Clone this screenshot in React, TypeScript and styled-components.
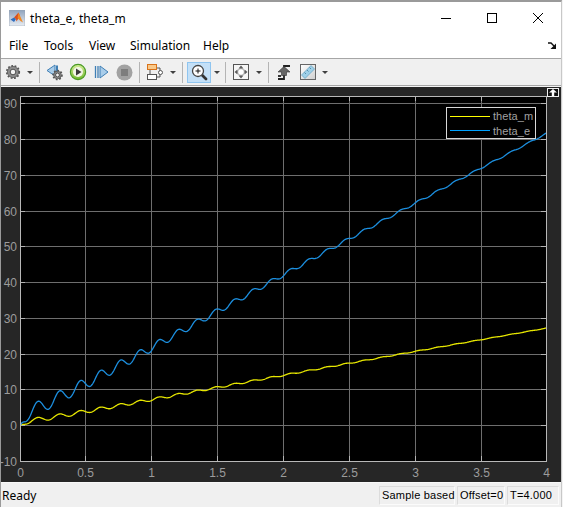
import React from 'react';
import styled, { createGlobalStyle } from 'styled-components';

const GlobalStyle = createGlobalStyle`
  html, body {
    margin: 0;
    padding: 0;
    background: #f4f4f4;
  }
`;

const Window = styled.div`
  width: 562px;
  height: 507px;
  box-sizing: border-box;
  display: flex;
  flex-direction: column;
  border-top: 2px solid #9a9a9a;
  border-left: 1px solid #9a9a9a;
  border-right: 1px solid #c8c8c8;
  font-family: "Noto Sans", "Open Sans", sans-serif;
  color: #000;
  overflow: hidden;
`;

const TitleBar = styled.div`
  height: 32px;
  flex: none;
  display: flex;
  align-items: center;
  background: #fff;
  padding-left: 8px;
`;

const Title = styled.span`
  margin-left: 5px;
  font-size: 12px;
  letter-spacing: 0.1px;
`;

const WindowControls = styled.div`
  margin-left: auto;
  display: flex;
  height: 100%;
`;

const WindowControl = styled.div`
  width: 46px;
  display: flex;
  align-items: center;
  justify-content: center;
`;

const MenuBar = styled.div`
  height: 24px;
  flex: none;
  box-sizing: border-box;
  display: flex;
  align-items: center;
  background: #fff;
  padding: 0 0 2px 8px;
  font-size: 12px;
`;

const MenuItem = styled.span<{ $width: number }>`
  width: ${(p) => p.$width}px;
`;

const MenuCorner = styled.svg`
  margin-left: auto;
  margin-right: 5px;
`;

const Toolbar = styled.div`
  height: 26px;
  flex: none;
  display: flex;
  align-items: center;
  background: #f0f0f0;
  border-top: 1px solid #a6a6a6;
  border-bottom: 1px solid #a6a6a6;
  padding-left: 1px;
`;

const ToolButton = styled.div<{ $width: number; $active?: boolean }>`
  width: ${(p) => p.$width}px;
  height: 21px;
  flex: none;
  box-sizing: border-box;
  display: flex;
  align-items: center;
  justify-content: center;
  background: ${(p) => (p.$active ? '#c4e0f7' : 'transparent')};
  border: 1px solid ${(p) => (p.$active ? '#8fc5f0' : 'transparent')};
`;

const ToolSeparator = styled.div`
  width: 1px;
  height: 21px;
  flex: none;
  margin: 0 4px 0 3px;
  background: #b4b4b4;
`;

const Figure = styled.div`
  height: 395px;
  flex: none;
  position: relative;
  margin-top: 1px;
  background: #262626;
`;

const PlotSvg = styled.svg`
  display: block;
`;

const TickText = styled.text`
  font-family: "Liberation Sans", Arial, sans-serif;
  font-size: 12px;
  fill: #9c9c9c;
`;

const RestoreButton = styled.div`
  position: absolute;
  left: 546px;
  top: 1px;
  width: 12px;
  height: 9px;
  box-sizing: border-box;
  border: 1px solid #f0f0f0;
  background: #111;
  display: flex;
  align-items: center;
  justify-content: center;
`;

const Legend = styled.div`
  position: absolute;
  left: 445px;
  top: 20px;
  width: 90px;
  height: 32px;
  box-sizing: border-box;
  border: 1px solid #d8d8d8;
  background: #000;
  padding: 1px 0 0 3px;
  display: flex;
  flex-direction: column;
  font-family: "Liberation Sans", Arial, sans-serif;
  font-size: 11px;
  letter-spacing: 0.05px;
  color: #a2a2a2;
`;

const LegendRow = styled.div`
  height: 14.5px;
  display: flex;
  align-items: center;
`;

const LegendSwatch = styled.span<{ $color: string }>`
  width: 40px;
  height: 1px;
  margin-right: 3px;
  background: ${(p) => p.$color};
`;

const StatusBar = styled.div`
  flex: 1;
  display: flex;
  align-items: center;
  background: #f0f0f0;
  border-top: 1px solid #f8f8f8;
  padding: 0 2px 0 1px;
  font-family: "Noto Sans", "Open Sans", sans-serif;
  font-size: 12px;
`;

const StatusText = styled.span`
  margin-right: auto;
`;

const StatusCell = styled.div<{ $width: number }>`
  width: ${(p) => p.$width}px;
  height: 19px;
  box-sizing: border-box;
  margin-left: 2px;
  padding-left: 2px;
  border: 1px solid #dcdcdc;
  border-right-color: #fbfbfb;
  border-bottom-color: #fbfbfb;
  display: flex;
  align-items: center;
  white-space: nowrap;
  font-family: "Liberation Sans", Arial, sans-serif;
  font-size: 11px;
  letter-spacing: 0.2px;
`;

const xTicks: [number, string][] = [
  [20, '0'], [85, '0.5'], [151, '1'], [217, '1.5'], [283, '2'],
  [349, '2.5'], [415, '3'], [481, '3.5'], [546, '4'],
];

const yTicks: [number, string][] = [
  [461, '-10'], [425, '0'], [389, '10'], [354, '20'], [318, '30'], [282, '40'],
  [246, '50'], [211, '60'], [175, '70'], [139, '80'], [103, '90'],
];

// rotor angle: ramp plus a ripple that speeds up and dies out
const thetaE = (t: number): number => {
  const start = 1 - Math.exp(-t / 0.03);
  const offset = 2.5 * Math.exp(-1.5 * t) * start;
  const phase = 45 * t - 6 * (1 - Math.exp(-t / 0.6));
  const ripple = 2.1 * Math.exp(-0.65 * t) * start * Math.sin(phase);
  return 20.4 * t + 1.2 * Math.sin((Math.PI * t) / 4) + offset - ripple;
};

const tracePath = (gain: number): string => {
  const points: string[] = [];
  for (let i = 0; i <= 800; i++) {
    const t = i / 200;
    points.push(`${(20.5 + 131.5 * t).toFixed(2)},${(425.5 - 3.58 * thetaE(t) * gain).toFixed(2)}`);
  }
  return 'M' + points.join('L');
};

const Arrow = () => (
  <svg width="6" height="3" viewBox="0 0 6 3"><path d="M0 0h6L3 3z" fill="#404040" /></svg>
);

const GearGlyph = ({ cx, cy, r }: { cx: number; cy: number; r: number }) => (
  <g>
    <circle cx={cx} cy={cy} r={r} fill="#8c8c8c" stroke="#555" strokeWidth="0.8" />
    <circle cx={cx} cy={cy} r={r + 0.7} fill="none" stroke="#555" strokeWidth="1.6" strokeDasharray="1.8 1.6" />
    <circle cx={cx} cy={cy} r={r * 0.5} fill="#f4f4f4" stroke="#444" strokeWidth="0.9" />
  </g>
);

const Gear = () => (
  <svg width="16" height="16" viewBox="0 0 16 16"><GearGlyph cx={8} cy={8} r={5.6} /></svg>
);

const StepBack = () => (
  <svg width="19" height="18" viewBox="0 0 19 18">
    <path d="M1 7.5 9 2v11z" fill="#a9cdea" stroke="#3f7fb5" />
    <path d="M11 2.5v10" stroke="#3f7fb5" strokeWidth="2" />
    <GearGlyph cx={11.5} cy={12} r={3.8} />
  </svg>
);

const Play = () => (
  <svg width="18" height="18" viewBox="0 0 18 18">
    <defs>
      <linearGradient id="playFill" x1="0" y1="0" x2="0" y2="1">
        <stop offset="0" stopColor="#d8ef9a" />
        <stop offset="1" stopColor="#70b82c" />
      </linearGradient>
    </defs>
    <circle cx="9" cy="9" r="7.6" fill="url(#playFill)" stroke="#4a9a24" strokeWidth="1.2" />
    <circle cx="9" cy="9" r="5" fill="#f3f6e6" />
    <path d="M7 5.5 12.5 9 7 12.5z" fill="#3a3a3a" />
  </svg>
);

const StepForward = () => (
  <svg width="15" height="14" viewBox="0 0 15 14">
    <path d="M1.5 1v12M4 1v12" stroke="#3f7fb5" strokeWidth="1.3" />
    <path d="M6 1l8 6-8 6z" fill="#a9cdea" stroke="#3f7fb5" />
  </svg>
);

const Stop = () => (
  <svg width="17" height="17" viewBox="0 0 17 17">
    <circle cx="8.5" cy="8.5" r="8" fill="#a2a2a2" />
    <rect x="5" y="5" width="7" height="7" fill="#7d7d7d" />
  </svg>
);

const Blocks = () => (
  <svg width="18" height="17" viewBox="0 0 18 17">
    <path d="M4 6v4M11 4h3v3M11 13h3v-3" fill="none" stroke="#555" />
    <rect x="1.5" y="0.5" width="9" height="5" fill="#f9c98a" stroke="#d9731a" />
    <rect x="1.5" y="10.5" width="9" height="5" fill="#fff" stroke="#555" />
    <circle cx="14.5" cy="8.5" r="2" fill="#fff" stroke="#555" />
  </svg>
);

const ZoomIn = () => (
  <svg width="17" height="17" viewBox="0 0 17 17">
    <path d="M10.5 10.5 15 15" stroke="#333" strokeWidth="2.8" strokeLinecap="round" />
    <circle cx="7" cy="7" r="5.5" fill="#fff" stroke="#444" strokeWidth="1.3" />
    <path d="M4.5 7h5M7 4.5v5" stroke="#111" />
  </svg>
);

const AutoScale = () => (
  <svg width="16" height="16" viewBox="0 0 16 16">
    <rect x="0.5" y="0.5" width="15" height="15" fill="#f6f6f6" stroke="#555" />
    <circle cx="8" cy="8" r="3.4" fill="#fff" stroke="#aaa" />
    <path d="M8 1.5 10.5 4.5h-5zM8 14.5 5.5 11.500h5zM1.500 8 4.500 5.500v5zM14.500 8 11.500 10.500v-5z" fill="#5c5c5c" />
  </svg>
);

const Trigger = () => (
  <svg width="14" height="16" viewBox="0 0 14 16">
    <path d="M1 15h6V2h6" fill="none" stroke="#222" strokeWidth="1.8" />
    <path d="M1 12h3" stroke="#222" strokeWidth="1.8" />
    <path d="M1 8 7 2.500 13 8H9.500v3.500h-5V8z" fill="#666" stroke="#333" strokeWidth="0.6" />
  </svg>
);

const Ruler = () => (
  <svg width="16" height="16" viewBox="0 0 16 16">
    <defs>
      <linearGradient id="rulerBack" x1="0" y1="0" x2="1" y2="1">
        <stop offset="0" stopColor="#ffffff" />
        <stop offset="1" stopColor="#cfcfcf" />
      </linearGradient>
    </defs>
    <rect x="0.5" y="0.5" width="15" height="15" fill="url(#rulerBack)" stroke="#666" />
    <path d="M1.5 11 11 1.5 14.5 5 5 14.5z" fill="#9fd0e8" stroke="#5f9fc0" strokeWidth="0.7" />
    <path d="M4.5 8.5l1.5 1.500M7 6l1.500 1.500M9.500 3.500l1.500 1.500" stroke="#3f7f9f" strokeWidth="0.8" />
  </svg>
);

const MatlabLogo = () => (
  <svg width="16" height="16" viewBox="0 0 16 16">
    <defs>
      <linearGradient id="logoBack" x1="0" y1="0" x2="0" y2="1">
        <stop offset="0" stopColor="#8fa3bd" />
        <stop offset="1" stopColor="#e8edf3" />
      </linearGradient>
    </defs>
    <rect x="0" y="0" width="16" height="16" fill="url(#logoBack)" stroke="#9aa5b3" strokeWidth="0.6" />
    <path d="M1.5 9.500 5 7.500 7 9 5 12z" fill="#2f6fc0" />
    <path d="M5 7.500 9.500 2.500 11 6 7.500 11.500 7 9z" fill="#d9501e" />
    <path d="M9.500 2.500 14 12.500 11.500 11 8.500 8z" fill="#f08a24" />
  </svg>
);

export default function App(): React.ReactElement {
  return (
    <Window>
      <GlobalStyle />
      <TitleBar>
        <MatlabLogo />
        <Title>theta_e, theta_m</Title>
        <WindowControls>
          <WindowControl>
            <svg width="10" height="10" viewBox="0 0 10 10"><path d="M0 5.500h10" stroke="#000" /></svg>
          </WindowControl>
          <WindowControl>
            <svg width="10" height="10" viewBox="0 0 10 10"><rect x="0.500" y="0.500" width="9" height="9" fill="none" stroke="#000" /></svg>
          </WindowControl>
          <WindowControl>
            <svg width="10" height="10" viewBox="0 0 10 10"><path d="M0 0l10 10M10 0 0 10" stroke="#000" /></svg>
          </WindowControl>
        </WindowControls>
      </TitleBar>

      <MenuBar>
        <MenuItem $width={35}>File</MenuItem>
        <MenuItem $width={45}>Tools</MenuItem>
        <MenuItem $width={41}>View</MenuItem>
        <MenuItem $width={73}>Simulation</MenuItem>
        <MenuItem $width={30}>Help</MenuItem>
        <MenuCorner width="8" height="7" viewBox="0 0 8 7">
          <path d="M0 1h3l3 3" fill="none" stroke="#111" strokeWidth="1.4" />
          <path d="M8 1.500V7H2.500z" fill="#111" />
        </MenuCorner>
      </MenuBar>

      <Toolbar>
        <ToolButton $width={22}><Gear /></ToolButton>
        <ToolButton $width={12}><Arrow /></ToolButton>
        <ToolSeparator />
        <ToolButton $width={22}><StepBack /></ToolButton>
        <ToolButton $width={24}><Play /></ToolButton>
        <ToolButton $width={22}><StepForward /></ToolButton>
        <ToolButton $width={24}><Stop /></ToolButton>
        <ToolSeparator />
        <ToolButton $width={22}><Blocks /></ToolButton>
        <ToolButton $width={13}><Arrow /></ToolButton>
        <ToolSeparator />
        <ToolButton $width={24} $active><ZoomIn /></ToolButton>
        <ToolButton $width={11}><Arrow /></ToolButton>
        <ToolSeparator />
        <ToolButton $width={22}><AutoScale /></ToolButton>
        <ToolButton $width={13}><Arrow /></ToolButton>
        <ToolSeparator />
        <ToolButton $width={22}><Trigger /></ToolButton>
        <ToolButton $width={26}><Ruler /></ToolButton>
        <ToolButton $width={8}><Arrow /></ToolButton>
      </Toolbar>

      <Figure>
        <PlotSvg width="560" height="395" viewBox="1 87 560 395">
          <rect x="20" y="96" width="527" height="366" fill="#000" />
          {xTicks.map(([x]) => (
            <path key={x} d={`M${x + 0.5} 96V461`} stroke="#6e6e6e" />
          ))}
          {yTicks.map(([y]) => (
            <path key={y} d={`M20 ${y + 0.5}H546`} stroke="#6e6e6e" />
          ))}
          {xTicks.map(([x]) => (
            <path key={x} d={`M${x + 0.5} 96v5M${x + 0.5} 461v-5`} stroke="#b4b4b4" />
          ))}
          {yTicks.map(([y]) => (
            <path key={y} d={`M20 ${y + 0.5}h5M546 ${y + 0.5}h-5`} stroke="#b4b4b4" />
          ))}
          <path d={tracePath(1 / 3)} fill="none" stroke="#e6e600" strokeWidth="1.3" />
          <path d={tracePath(1)} fill="none" stroke="#1c8fdf" strokeWidth="1.3" />
          <rect x="20.5" y="96.5" width="526" height="365" fill="none" stroke="#b8b8b8" />
          {xTicks.map(([x, label]) => (
            <TickText key={label} x={x + 0.5} y="477" textAnchor="middle">{label}</TickText>
          ))}
          {yTicks.map(([y, label]) => (
            <TickText key={label} x="17" y={y + 5} textAnchor="end">{label}</TickText>
          ))}
        </PlotSvg>
        <RestoreButton>
          <svg width="8" height="7" viewBox="0 0 8 7">
            <path d="M4 0 8 3.500H5.200V7H2.800V3.500H0z" fill="#fff" />
          </svg>
        </RestoreButton>
        <Legend>
          <LegendRow><LegendSwatch $color="#ffff00" />theta_m</LegendRow>
          <LegendRow><LegendSwatch $color="#00a2ff" />theta_e</LegendRow>
        </Legend>
      </Figure>

      <StatusBar>
        <StatusText>Ready</StatusText>
        <StatusCell $width={76}>Sample based</StatusCell>
        <StatusCell $width={48}>Offset=0</StatusCell>
        <StatusCell $width={52}>T=4.000</StatusCell>
      </StatusBar>
    </Window>
  );
}
